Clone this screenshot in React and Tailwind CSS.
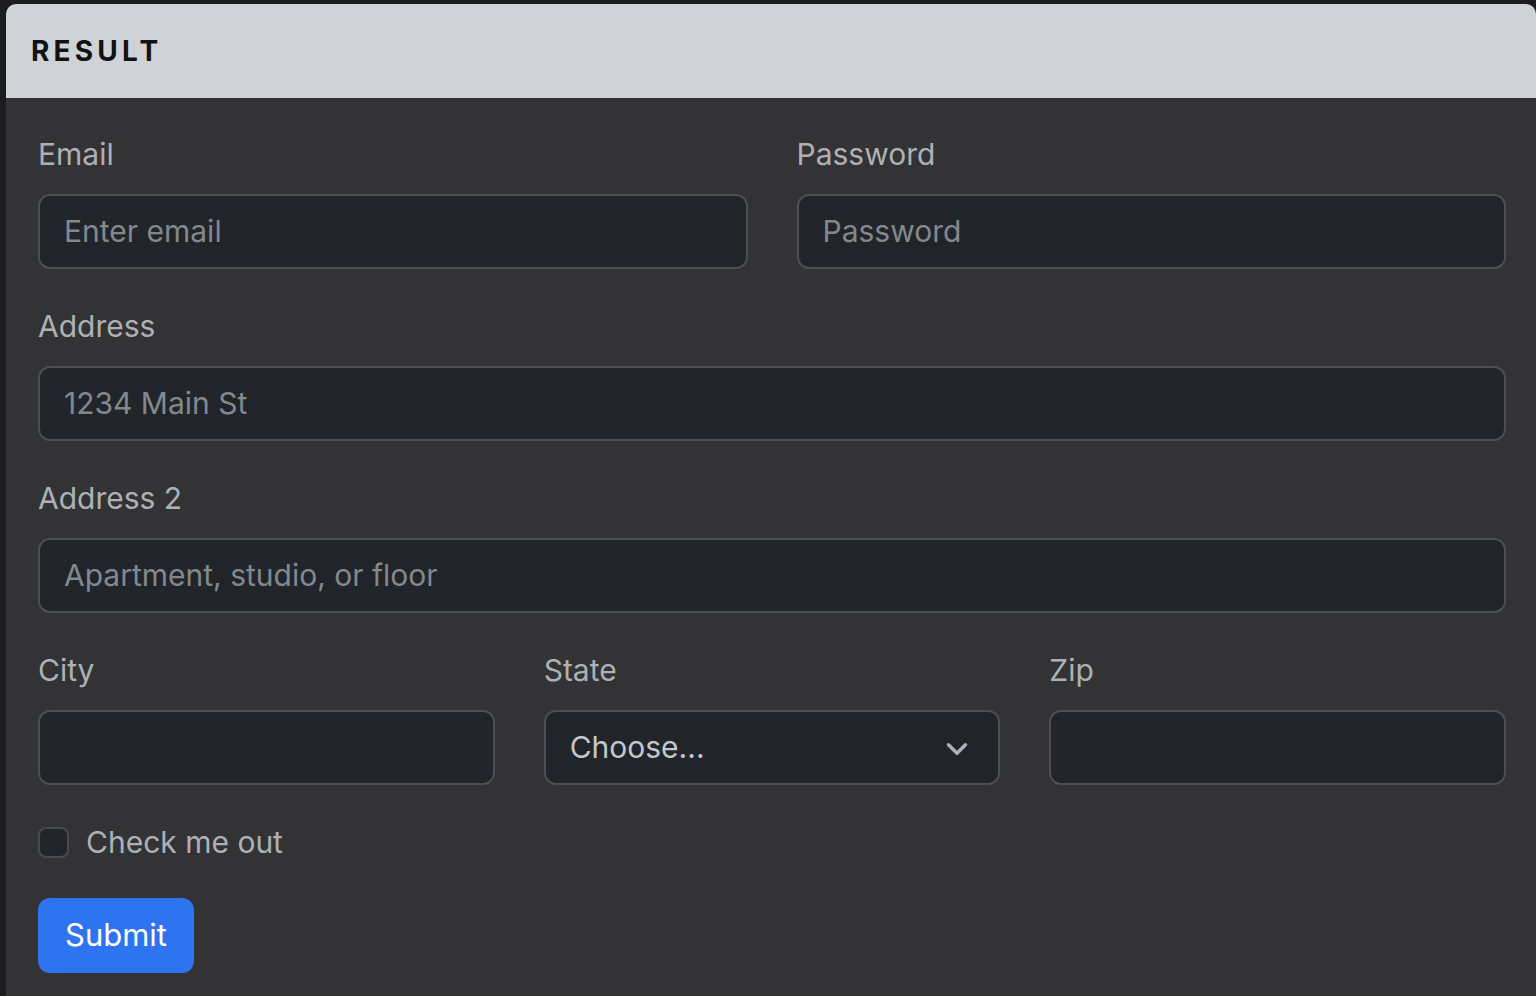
import { ChevronDown } from 'lucide-react';

const font = { fontFamily: 'Inter, "Liberation Sans", sans-serif' };

// bootstrap-ish dark form field, drawn at 2x
const Field = ({ label, placeholder, className = '' }) => (
  <div className={`flex flex-col ${className}`}>
    <label className="h-[48px] leading-[48px] mb-[16px] text-[30px] text-[#adb1b6]">{label}</label>
    <div className="h-[75px] rounded-[12px] border-2 border-[#4a4f55] bg-[#212529] px-[24px] flex items-center text-[30px] text-[#83888e]">
      {placeholder}
    </div>
  </div>
);

export default function App() {
  return (
    <div className="w-[1536px] h-[996px] bg-[#1c1c1e] pl-[6px] pt-[4px] overflow-hidden" style={font}>
      <div className="h-full rounded-t-[10px] overflow-hidden bg-[#333335] flex flex-col">
        <div className="h-[94px] shrink-0 bg-[#cfd2d6] flex items-center pl-[25px]">
          <span className="text-[28px] font-bold tracking-[0.15em] text-[#111214]">RESULT</span>
        </div>

        <div className="pl-[32px] pr-[30px] pt-[32px] flex flex-col gap-[33px]">
          <div className="grid grid-cols-2 gap-x-[49px]">
            <Field label="Email" placeholder="Enter email" />
            <Field label="Password" placeholder="Password" />
          </div>
          <Field label="Address" placeholder="1234 Main St" />
          <Field label="Address 2" placeholder="Apartment, studio, or floor" />

          <div className="grid grid-cols-3 gap-x-[49px]">
            <Field label="City" placeholder="" />
            <div className="flex flex-col">
              <label className="h-[48px] leading-[48px] mb-[16px] text-[30px] text-[#adb1b6]">State</label>
              <div className="h-[75px] rounded-[12px] border-2 border-[#4a4f55] bg-[#212529] pl-[24px] pr-[24px] flex items-center justify-between text-[30px] text-[#c3c7cb]">
                <span>Choose...</span>
                <ChevronDown size={34} strokeWidth={2.4} className="text-[#aeb3b8] mt-[2px]" />
              </div>
            </div>
            <Field label="Zip" placeholder="" />
          </div>

          <div className="h-[48px] flex items-center gap-[17px]">
            <div className="w-[31px] h-[31px] rounded-[8px] border-2 border-[#464b51] bg-[#212529]" />
            <span className="text-[30px] text-[#adb1b6]">Check me out</span>
          </div>

          <div className="-mt-[1px]">
            <button className="h-[75px] px-[27px] rounded-[12px] bg-[#2e74f1] text-white text-[31px]">
              Submit
            </button>
          </div>
        </div>
      </div>
    </div>
  );
}
